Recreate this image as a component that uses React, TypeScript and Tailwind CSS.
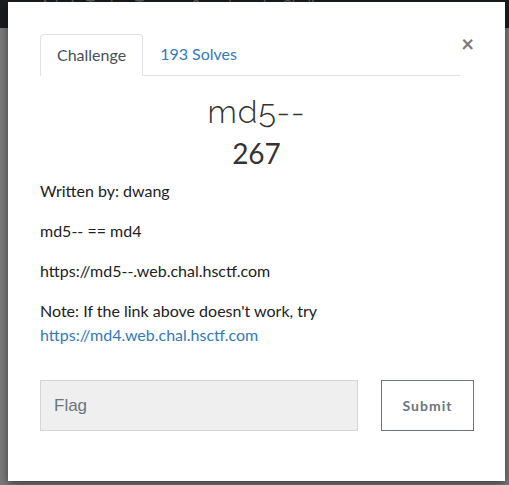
import React from "react";

export default function App() {
  return (
    <div className="relative h-[485px] w-[509px] overflow-hidden bg-[#7b7b7b] font-['Lato','Liberation_Sans',sans-serif]">
      {/* page behind the backdrop */}
      <div className="h-[28px] bg-[#1a1d20] px-[40px] text-[15px] leading-[10px] text-[#5a5d60]">
        Admin Tools &nbsp;&nbsp; Teams &nbsp;&nbsp; Scoreboard &nbsp;&nbsp; Challenges
      </div>

      <div className="absolute left-[8px] top-[2px] flex h-[479px] w-[497px] flex-col bg-white px-[32px] pt-[32px] shadow-[0_3px_9px_rgba(0,0,0,0.5)]">
        <div className="flex items-start">
          <div className="flex h-[42px] w-[420px] items-end border-b border-[#dee2e6]">
            <div className="-mb-px flex h-[42px] items-center rounded-t-[4px] border border-b-white border-[#dee2e6] bg-white px-[16px] text-[16px] text-[#495057]">
              Challenge
            </div>
            <div className="flex h-[42px] items-center px-[17px] text-[16px] text-[#337ab7]">
              193 Solves
            </div>
          </div>
          <button className="ml-auto mr-[-1px] mt-[-1px] text-[22px] font-bold leading-none text-[#7a7a7a]">
            ×
          </button>
        </div>

        <div className="mt-[18px] text-center font-['Raleway','Lato',sans-serif] text-[32px] font-light leading-[36px] tracking-[1px] text-[#333]">
          md5--
        </div>
        <div className="mt-[7px] text-center text-[28px] leading-[32px] text-[#333]">267</div>

        <div className="mt-[10px] text-[16px] leading-[24px] text-[#222]">
          <p>Written by: dwang</p>
          <p className="mt-[16px]">md5-- == md4</p>
          <p className="mt-[16px]">https://md5--.web.chal.hsctf.com</p>
          <p className="mt-[16px]">
            Note: If the link above doesn't work, try
            <br />
            <a className="text-[#337ab7]">https://md4.web.chal.hsctf.com</a>
          </p>
        </div>

        <div className="mt-[33px] flex items-start">
          <input
            placeholder="Flag"
            className="h-[51px] w-[318px] border border-[#d2d6da] bg-[#efefef] px-[13px] font-['Liberation_Sans',sans-serif] text-[17px] text-[#495057] placeholder:text-[#6c757d] outline-none"
          />
          <button className="ml-auto mr-[-1px] h-[51px] w-[93px] border border-[#6c757d] bg-white text-[14px] font-bold tracking-[1px] text-[#6c757d]">
            Submit
          </button>
        </div>
      </div>
    </div>
  );
}
